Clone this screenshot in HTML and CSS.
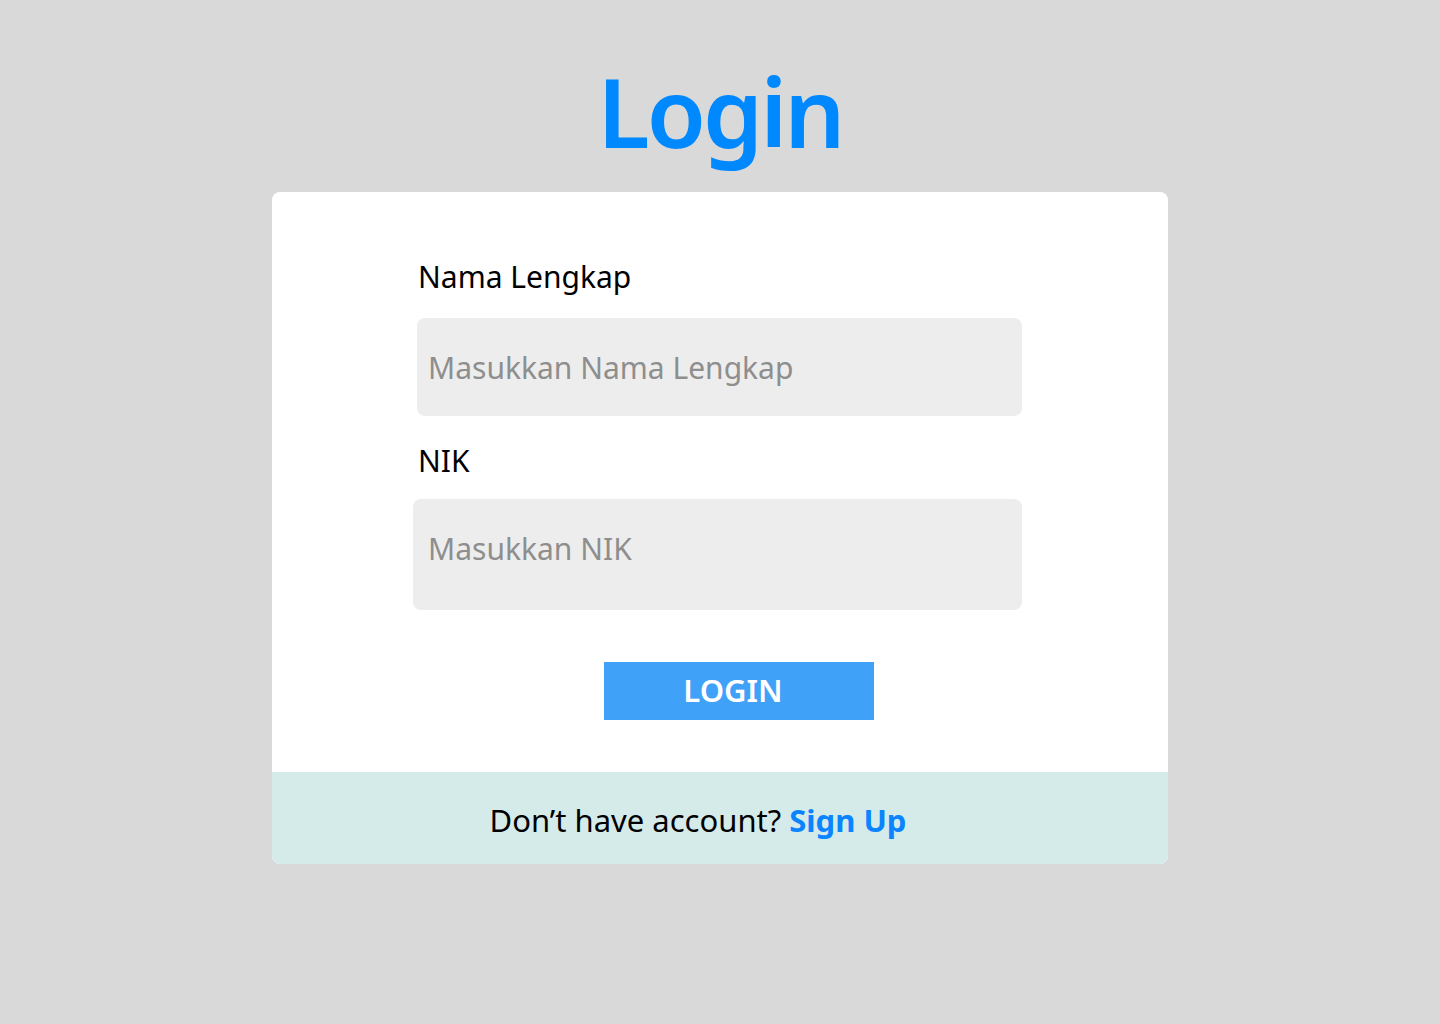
FILE: index.html
```html
<!DOCTYPE html>
<html lang="id">
<head>
<meta charset="utf-8">
<title>Login</title>
<link rel="stylesheet" href="styles.css">
</head>
<body>
<main class="page">
  <h1 class="title">Login</h1>
  <section class="card">
    <form class="form">
      <label class="label" for="nama">Nama Lengkap</label>
      <input class="field field-nama" id="nama" type="text" placeholder="Masukkan Nama Lengkap">
      <label class="label label-nik" for="nik">NIK</label>
      <input class="field field-nik" id="nik" type="text" placeholder="Masukkan NIK">
      <div class="actions">
        <button class="btn" type="button">LOGIN</button>
      </div>
    </form>
    <footer class="card-footer">
      <span class="footer-text">Don’t have account? <a class="signup" href="#">Sign Up</a></span>
    </footer>
  </section>
</main>
</body>
</html>
```
FILE: styles.css
```css
* { box-sizing: border-box; }
html, body { margin: 0; padding: 0; }
body {
  background: #d9d9d9;
  font-family: "Noto Sans", "Open Sans", sans-serif;
  color: #000;
  min-height: 1024px;
}
.page {
  display: flex;
  flex-direction: column;
  align-items: center;
}
.title {
  margin: 0;
  padding-top: 45px;
  height: 192px;
  font-size: 96px;
  font-weight: 600;
  line-height: 131px;
  letter-spacing: -3px;
  color: #0088ff;
}
.card {
  width: 896px;
  background: #fff;
  border-radius: 8px;
  overflow: hidden;
}
.form {
  display: flex;
  flex-direction: column;
  padding: 65px 146px 52px 145px;
}
.label {
  font-size: 30px;
  line-height: 40px;
  height: 40px;
  padding-left: 1px;
}
.label-nik { margin-top: 25px; }
.field {
  border: none;
  outline: none;
  background: #ededed;
  border-radius: 8px;
  font-family: inherit;
  font-size: 30px;
  color: #000;
  padding: 0 0 0 11px;
}
.field::placeholder { color: #8e8e8e; }
.field-nama {
  margin-top: 21px;
  height: 98px;
}
.field-nik {
  margin-top: 18px;
  margin-left: -4px;
  height: 111px;
  padding-left: 15px;
  padding-bottom: 12px;
}
.actions {
  display: flex;
  justify-content: center;
  margin-top: 52px;
  padding-left: 39px;
}
.btn {
  width: 270px;
  height: 58px;
  border: none;
  border-radius: 0;
  background: #40a1f9;
  color: #fff;
  font-family: inherit;
  font-size: 31px;
  font-weight: 600;
  padding: 0 12px 2px 0;
  line-height: 56px;
}
.card-footer {
  height: 92px;
  background: #d5ebea;
  display: flex;
  align-items: center;
  justify-content: center;
  padding: 4px 44px 0 0;
}
.footer-text {
  font-size: 31px;
  line-height: 40px;
}
.signup {
  color: #0a84ff;
  font-weight: 700;
  text-decoration: none;
}
```
